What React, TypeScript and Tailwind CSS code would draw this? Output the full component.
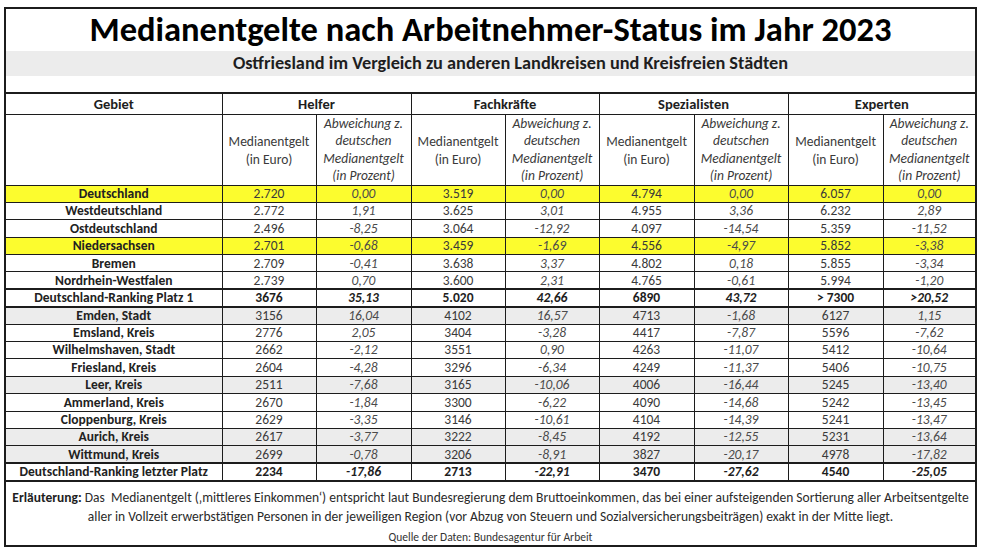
const FONT = "font-['Carlito','Lato','Liberation_Sans',sans-serif]";

type Row = {
  name: string;
  v: string[];
  kind?: "yellow" | "gray" | "bold";
};

const rows: Row[] = [
  { name: "Deutschland", v: ["2.720", "0,00", "3.519", "0,00", "4.794", "0,00", "6.057", "0,00"], kind: "yellow" },
  { name: "Westdeutschland", v: ["2.772", "1,91", "3.625", "3,01", "4.955", "3,36", "6.232", "2,89"] },
  { name: "Ostdeutschland", v: ["2.496", "-8,25", "3.064", "-12,92", "4.097", "-14,54", "5.359", "-11,52"] },
  { name: "Niedersachsen", v: ["2.701", "-0,68", "3.459", "-1,69", "4.556", "-4,97", "5.852", "-3,38"], kind: "yellow" },
  { name: "Bremen", v: ["2.709", "-0,41", "3.638", "3,37", "4.802", "0,18", "5.855", "-3,34"] },
  { name: "Nordrhein-Westfalen", v: ["2.739", "0,70", "3.600", "2,31", "4.765", "-0,61", "5.994", "-1,20"] },
  { name: "Deutschland-Ranking Platz 1", v: ["3676", "35,13", "5.020", "42,66", "6890", "43,72", "> 7300", ">20,52"], kind: "bold" },
  { name: "Emden, Stadt", v: ["3156", "16,04", "4102", "16,57", "4713", "-1,68", "6127", "1,15"], kind: "gray" },
  { name: "Emsland, Kreis", v: ["2776", "2,05", "3404", "-3,28", "4417", "-7,87", "5596", "-7,62"] },
  { name: "Wilhelmshaven, Stadt", v: ["2662", "-2,12", "3551", "0,90", "4263", "-11,07", "5412", "-10,64"] },
  { name: "Friesland, Kreis", v: ["2604", "-4,28", "3296", "-6,34", "4249", "-11,37", "5406", "-10,75"] },
  { name: "Leer, Kreis", v: ["2511", "-7,68", "3165", "-10,06", "4006", "-16,44", "5245", "-13,40"], kind: "gray" },
  { name: "Ammerland, Kreis", v: ["2670", "-1,84", "3300", "-6,22", "4090", "-14,68", "5242", "-13,45"] },
  { name: "Cloppenburg, Kreis", v: ["2629", "-3,35", "3146", "-10,61", "4104", "-14,39", "5241", "-13,47"] },
  { name: "Aurich, Kreis", v: ["2617", "-3,77", "3222", "-8,45", "4192", "-12,55", "5231", "-13,64"], kind: "gray" },
  { name: "Wittmund, Kreis", v: ["2699", "-0,78", "3206", "-8,91", "3827", "-20,17", "4978", "-17,82"], kind: "gray" },
  { name: "Deutschland-Ranking letzter Platz", v: ["2234", "-17,86", "2713", "-22,91", "3470", "-27,62", "4540", "-25,05"], kind: "bold" },
];

const groups = ["Helfer", "Fachkräfte", "Spezialisten", "Experten"];

export default function App() {
  return (
    <div className={`w-[983px] h-[553px] bg-white pl-[4px] pt-[7px] ${FONT}`}>
      <div className="w-[973px] h-[540px] border-2 border-[#1c1c1c] flex flex-col">
        {/* Title */}
        <div className="h-[42px] flex items-center justify-center text-[34.5px] font-bold text-black">
          Medianentgelte nach Arbeitnehmer-Status im Jahr 2023
        </div>
        <div className="h-[25px] bg-[#ececec] flex items-center justify-center pl-[40px] text-[18.3px] font-bold text-[#1e1e1e]">
          Ostfriesland im Vergleich zu anderen Landkreisen und Kreisfreien Städten
        </div>
        <div className="h-[16px]" />

        {/* Table */}
        <table className="w-full table-fixed border-collapse text-[13.5px] leading-none">
          <colgroup>
            <col className="w-[216px]" />
            <col className="w-[94px]" />
            <col className="w-[95px]" />
            <col className="w-[94px]" />
            <col className="w-[94px]" />
            <col className="w-[95px]" />
            <col className="w-[94px]" />
            <col className="w-[95px]" />
            <col />
          </colgroup>
          <thead>
            <tr className="h-[21px] border-t-2 border-[#1c1c1c]">
              <th className="border-r border-b border-[#1c1c1c] text-[14.5px] font-bold text-[#1e1e1e]">Gebiet</th>
              {groups.map((g, i) => (
                <th
                  key={g}
                  colSpan={2}
                  className={`border-b border-[#1c1c1c] text-[14.5px] font-bold text-[#1e1e1e] ${i < 3 ? "border-r" : ""}`}
                >
                  {g}
                </th>
              ))}
            </tr>
            <tr className="h-[71px]">
              <th className="border-r border-b border-[#1c1c1c]" />
              {groups.map((g, i) => (
                <>
                  <th key={g + "a"} className="border-r border-b border-[#1c1c1c] font-normal text-[#3a3a3a] leading-[17.5px] align-middle pt-[2px]">
                    Medianentgelt
                    <br />
                    (in Euro)
                  </th>
                  <th
                    key={g + "b"}
                    className={`border-b border-[#1c1c1c] font-normal italic text-[#3a3a3a] leading-[17.5px] ${i < 3 ? "border-r" : ""}`}
                  >
                    Abweichung z.
                    <br />
                    deutschen
                    <br />
                    Medianentgelt
                    <br />
                    (in Prozent)
                  </th>
                </>
              ))}
            </tr>
          </thead>
          <tbody>
            {rows.map((r) => {
              const bg =
                r.kind === "yellow" ? "bg-[#fcfc2e]" : r.kind === "gray" ? "bg-[#ececec]" : "bg-white";
              const bold = r.kind === "bold";
              const line = bold ? "border-y-2" : "border-b";
              return (
                <tr key={r.name} className={`h-[17.4px] ${bg} ${line} border-[#1c1c1c]`}>
                  <td className="border-r border-[#1c1c1c] text-center font-bold text-[#222] whitespace-nowrap">{r.name}</td>
                  {r.v.map((val, j) => {
                    const pct = j % 2 === 1;
                    return (
                      <td
                        key={j}
                        className={`text-center ${j < 7 ? "border-r border-[#1c1c1c]" : ""} ${
                          pct ? "italic" : ""
                        } ${bold ? "font-bold text-[#1e1e1e]" : pct ? "text-[#4a4a4a]" : "text-[#3a3a3a]"}`}
                      >
                        {val}
                      </td>
                    );
                  })}
                </tr>
              );
            })}
          </tbody>
        </table>

        {/* Footer */}
        <div className="flex-1 flex flex-col items-center pt-[6px] text-[13.5px] text-[#2a2a2a] leading-[19px]">
          <p className="text-center whitespace-nowrap">
            <span className="font-bold text-[#1e1e1e]">Erläuterung:</span> Das&nbsp; Medianentgelt (‚mittleres Einkommen‘)
            entspricht laut Bundesregierung dem Bruttoeinkommen, das bei einer aufsteigenden Sortierung aller Arbeitsentgelte
          </p>
          <p className="text-center whitespace-nowrap">
            aller in Vollzeit erwerbstätigen Personen in der jeweiligen Region (vor Abzug von Steuern und
            Sozialversicherungsbeiträgen) exakt in der Mitte liegt.
          </p>
          <p className="mt-[5px] text-[11.5px] leading-[13px] text-[#333]">Quelle der Daten: Bundesagentur für Arbeit</p>
        </div>
      </div>
    </div>
  );
}
